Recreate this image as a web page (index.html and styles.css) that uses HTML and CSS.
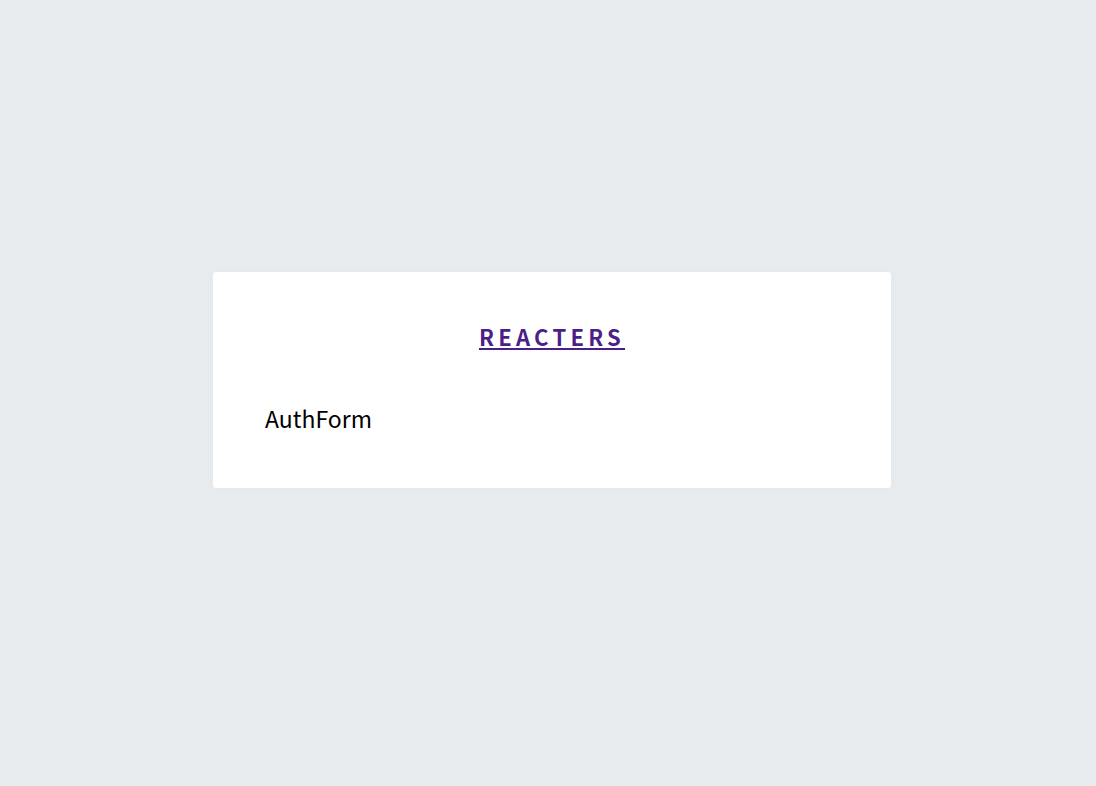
FILE: index.html
```html
<!DOCTYPE html>
<html>
<head>
<meta charset="utf-8">
<link rel="stylesheet" href="styles.css">
</head>
<body>
<div class="page">
  <div class="card">
    <div class="logo"><a href="#" class="logo-link">REACTERS</a></div>
    <div class="form">AuthForm</div>
  </div>
</div>
</body>
</html>
```
FILE: styles.css
```css
html, body {
  margin: 0;
  padding: 0;
  height: 100%;
}
body {
  background: #e9ecef;
  font-family: "Noto Sans CJK KR", sans-serif;
}
.page {
  height: 786px;
  box-sizing: border-box;
  display: flex;
  justify-content: center;
  align-items: center;
  padding-left: 8px;
  padding-bottom: 26px;
}
.card {
  width: 678px;
  height: 216px;
  box-sizing: border-box;
  background: #fff;
  border-radius: 3px;
  box-shadow: 0 0 8px rgba(0, 0, 0, 0.03);
  padding: 48px 50px;
}
.logo {
  text-align: center;
  line-height: 32px;
}
.logo-link {
  color: #4c1f88;
  font-weight: 700;
  font-size: 22px;
  letter-spacing: 4.25px;
  text-decoration: underline;
}
.form {
  margin-top: 46px;
  padding-left: 2px;
  font-size: 23px;
  color: #000;
}
```
